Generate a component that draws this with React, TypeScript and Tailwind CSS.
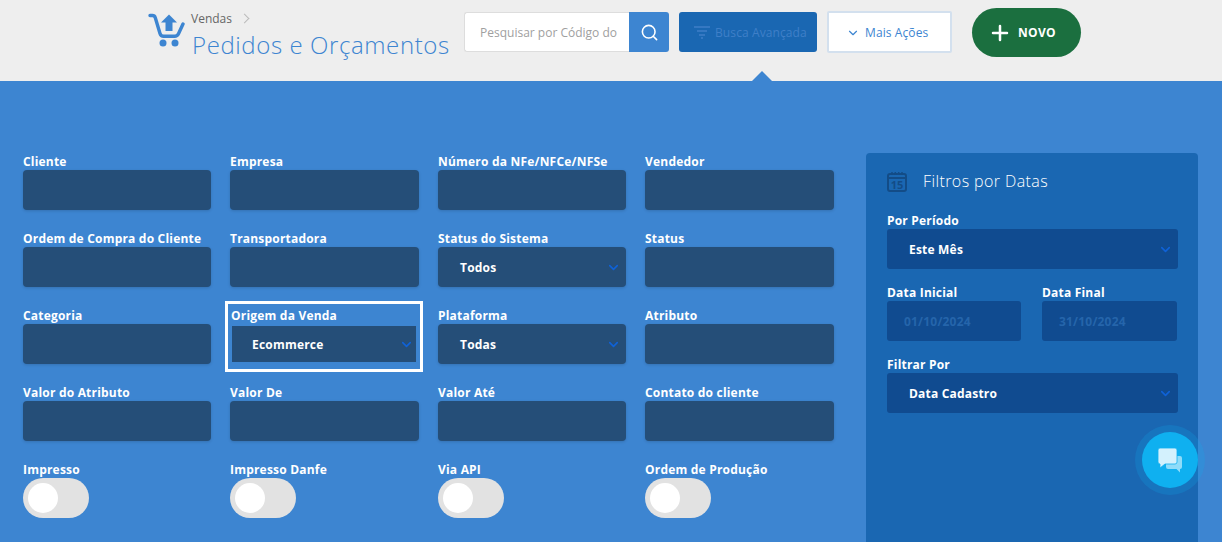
import { ChevronDown, Plus, Search } from 'lucide-react'

const fields = [
    { label: 'Cliente' },
    { label: 'Empresa' },
    { label: 'Número da NFe/NFCe/NFSe' },
    { label: 'Vendedor' },
    { label: 'Ordem de Compra do Cliente' },
    { label: 'Transportadora' },
    { label: 'Status do Sistema', value: 'Todos' },
    { label: 'Status' },
    { label: 'Categoria' },
    { label: 'Origem da Venda', value: 'Ecommerce', focused: true },
    { label: 'Plataforma', value: 'Todas' },
    { label: 'Atributo' },
    { label: 'Valor do Atributo' },
    { label: 'Valor De' },
    { label: 'Valor Até' },
    { label: 'Contato do cliente' },
]

const toggles = ['Impresso', 'Impresso Danfe', 'Via API', 'Ordem de Produção']

function Label({ children }: { children: React.ReactNode }) {
    return <div className="h-[17px] text-[12px] leading-[17px] font-bold tracking-[0.2px] text-white whitespace-nowrap">{children}</div>
}

function Chevron() {
    return <ChevronDown size={15} strokeWidth={2.5} className="text-[#0f62d8]" />
}

function CartIcon() {
    return (
        <svg width="37" height="35" viewBox="0 0 37 35" fill="none" className="shrink-0">
            <path d="M2 2.500h2.500c1.500 0 2.300.8 2.800 2.200L12 20.500c.6 2 1.600 2.800 3.600 2.800h11c2 0 3.100-.8 3.900-2.500L35 11" stroke="#3d85d1" strokeWidth="3.400" strokeLinecap="round" strokeLinejoin="round" />
            <circle cx="15" cy="30" r="3.500" fill="#3d85d1" />
            <circle cx="27" cy="30" r="3.500" fill="#3d85d1" />
            <path d="M21 1.500l8 7.900h-4.500V18h-7V9.400H13z" fill="#3d85d1" />
        </svg>
    )
}

function CalendarIcon() {
    return (
        <svg width="20" height="21" viewBox="0 0 20 21" fill="none" className="shrink-0">
            <rect x="1" y="3" width="18" height="17" rx="2" stroke="#134c87" strokeWidth="2" />
            <path d="M1 7h18" stroke="#134c87" strokeWidth="2" />
            <path d="M5 1v3M8.300 1v3M11.700 1v3M15 1v3" stroke="#134c87" strokeWidth="1.500" />
            <text x="10" y="17.500" textAnchor="middle" fontSize="11" fontWeight="700" fill="#134c87">15</text>
        </svg>
    )
}

function ChatIcon() {
    return (
        <svg width="26" height="26" viewBox="0 0 26 26">
            <path d="M9 9h14a2 2 0 0 1 2 2v9a2 2 0 0 1-2 2v3.500L19.500 22H11a2 2 0 0 1-2-2z" fill="#8fdcf9" />
            <path d="M3 1h15a2 2 0 0 1 2 2v12a2 2 0 0 1-2 2H8l-5 4v-4a2 2 0 0 1-2-2V3a2 2 0 0 1 2-2z" fill="#d3f1fd" stroke="#0fb0f0" strokeWidth="0.800" />
        </svg>
    )
}

function Toggle({ label }: { label: string }) {
    return (
        <div>
            <Label>{label}</Label>
            <div className="flex h-10 w-[66px] items-center rounded-full bg-[#e2e2e2] pl-[5px]">
                <div className="h-[30px] w-[30px] rounded-full bg-white" />
            </div>
        </div>
    )
}

export default function App() {
    return (
        <div className="relative h-[542px] w-[1222px] overflow-hidden bg-[#3d85d1] font-['Open_Sans',sans-serif]">
            <header className="relative flex h-[81px] items-start bg-[#eeeeee] pl-[148px]">
                <div className="mt-[13px]">
                    <CartIcon />
                </div>
                <div className="ml-[6px] mt-[10px] w-[273px]">
                    <div className="flex items-center gap-[9px] text-[12px] leading-[17px] text-[#666666]">
                        Vendas
                        <span className="h-[7px] w-[7px] rotate-45 border-t border-r border-[#bbbbbb]" />
                    </div>
                    <div className="ml-[1px] mt-[1px] text-[24px] leading-[33px] font-light tracking-[0.6px] text-[#3d85d1] whitespace-nowrap">Pedidos e Orçamentos</div>
                </div>
                <div className="mt-[12px] flex h-10 w-[205px]">
                    <div className="flex flex-1 items-center overflow-hidden rounded-l-[3px] border border-[#dddddd] border-r-0 bg-white pl-[15px] pt-[2px] text-[12px] whitespace-nowrap text-[#a0a0a0]">Pesquisar por Código do</div>
                    <button className="flex w-10 items-center justify-center rounded-r-[3px] bg-[#3d85d1] text-white">
                        <Search size={19} strokeWidth={2} />
                    </button>
                </div>
                <button className="ml-[10px] mt-[12px] flex h-10 w-[138px] items-center gap-[5px] rounded-[3px] bg-[#1a67b2] pl-[15px] pt-px text-[12px] tracking-[0.1px] text-[#3f7fc8]">
                    <svg width="16" height="13" viewBox="0 0 16 13" fill="none" stroke="#3f7fc8" strokeWidth="1.500">
                        <path d="M0 1h16M3 5h10M5 9h6M7 12h2" />
                    </svg>
                    Busca Avançada
                </button>
                <button className="ml-[10px] mt-[11px] flex h-[42px] w-[125px] items-center gap-[5px] rounded-[2px] border-2 border-[#d3e0ee] bg-white pl-[17px] pt-px text-[12px] tracking-[0.1px] text-[#3d85d1]">
                    <ChevronDown size={14} strokeWidth={2} />
                    Mais Ações
                </button>
                <button className="ml-[20px] mt-[8px] flex h-[49px] w-[109px] items-center gap-[6px] rounded-full bg-[#1b6f3f] pl-[16px] text-[12px] font-bold tracking-[0.3px] text-white">
                    <Plus size={24} strokeWidth={2.500} />
                    NOVO
                </button>
                <div className="absolute bottom-0 left-[752px] h-0 w-0 border-x-[10px] border-b-[10px] border-x-transparent border-b-[#3d85d1]" />
            </header>

            <main className="flex items-start gap-[32px] pl-[23px] pt-[72px]">
                <div className="w-[811px]">
                    <div className="grid grid-cols-[188px_189px_188px_189px] gap-x-[19px] gap-y-[20px]">
                        {fields.map((field) => {
                            if (field.focused) {
                                return (
                                    <div key={field.label} className="-mb-[8px] -ml-[5px] -mr-[4px] -mt-[6px] border-[3px] border-white px-[4px] pb-[7px] pt-[3px]">
                                        <div className="-ml-[1px]">
                                            <Label>{field.label}</Label>
                                        </div>
                                        <div className="mt-[2px] flex h-9 items-center justify-between bg-[#254e78] pl-[20px] pr-[2px] pt-px text-[12px] font-bold tracking-[0.2px] text-white">
                                            {field.value}
                                            <Chevron />
                                        </div>
                                    </div>
                                )
                            }
                            return (
                                <div key={field.label}>
                                    <Label>{field.label}</Label>
                                    <div className="flex h-10 items-center justify-between rounded-[4px] bg-[#254e78] pl-[22px] pr-[5px] pt-px text-[12px] font-bold tracking-[0.2px] text-white shadow-[0_1px_3px_rgba(0,0,0,0.15)]">
                                        {field.value}
                                        {field.value && <Chevron />}
                                    </div>
                                </div>
                            )
                        })}
                    </div>
                    <div className="mt-[20px] grid grid-cols-[188px_189px_188px_189px] gap-x-[19px]">
                        {toggles.map((label) => (
                            <Toggle key={label} label={label} />
                        ))}
                    </div>
                </div>

                <aside className="h-[420px] w-[332px] rounded-[4px] bg-[#1a67b2] pl-[21px] pr-[20px] pt-[18px]">
                    <div className="flex h-5 items-center gap-[16px]">
                        <CalendarIcon />
                        <span className="text-[16px] font-light tracking-[0.4px] text-white">Filtros por Datas</span>
                    </div>
                    <div className="mt-[21px]">
                        <Label>Por Período</Label>
                        <div className="flex h-10 items-center justify-between rounded-[3px] bg-[#104b90] pl-[22px] pr-[5px] pt-px text-[12px] font-bold tracking-[0.2px] text-white">
                            Este Mês
                            <Chevron />
                        </div>
                    </div>
                    <div className="mt-[15px] flex gap-[21px]">
                        <div className="w-[134px]">
                            <Label>Data Inicial</Label>
                            <div className="flex h-10 items-center rounded-[3px] bg-[#104b90] pl-[17px] pt-px text-[12px] font-bold tracking-[0.2px] text-[#2565ab]">01/10/2024</div>
                        </div>
                        <div className="w-[135px]">
                            <Label>Data Final</Label>
                            <div className="flex h-10 items-center rounded-[3px] bg-[#104b90] pl-[17px] pt-px text-[12px] font-bold tracking-[0.2px] text-[#2565ab]">31/10/2024</div>
                        </div>
                    </div>
                    <div className="mt-[15px]">
                        <Label>Filtrar Por</Label>
                        <div className="flex h-10 items-center justify-between rounded-[3px] bg-[#104b90] pl-[22px] pr-[5px] pt-px text-[12px] font-bold tracking-[0.2px] text-white">
                            Data Cadastro
                            <Chevron />
                        </div>
                    </div>
                </aside>
            </main>

            <div className="absolute left-[1135px] top-[425px] flex h-[70px] w-[70px] items-center justify-center rounded-full bg-[#0fb0f0]/20">
                <div className="flex h-14 w-14 items-center justify-center rounded-full bg-[#0fb0f0]">
                    <ChatIcon />
                </div>
            </div>
        </div>
    )
}
